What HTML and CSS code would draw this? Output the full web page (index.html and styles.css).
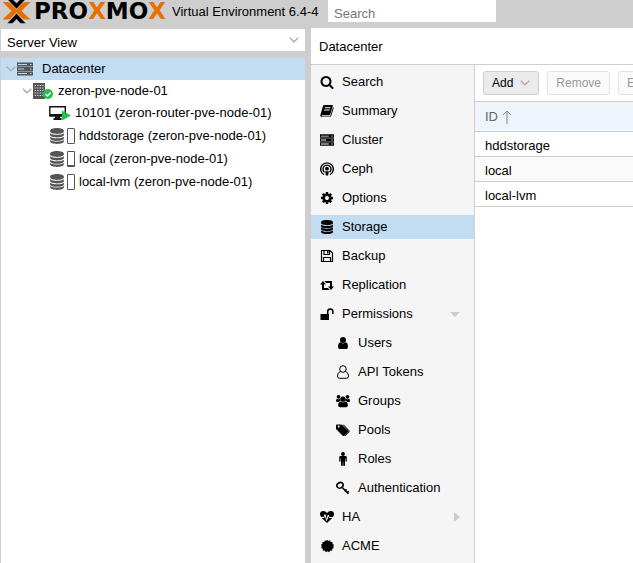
FILE: index.html
```html
<!DOCTYPE html>
<html lang="en">
<head>
<meta charset="utf-8">
<title>Proxmox Virtual Environment</title>
<link rel="stylesheet" href="styles.css">
</head>
<body>
<svg class="defs" aria-hidden="true">
  <symbol id="search" viewBox="0 0 1792 1792"><path d="M1216 832q0-185-131.5-316.5t-316.5-131.5-316.5 131.5-131.5 316.5 131.5 316.5 316.5 131.5 316.5-131.5 131.5-316.5zm512 832q0 52-38 90t-90 38q-54 0-90-38l-343-342q-179 124-399 124-143 0-273.5-55.5t-225-150-150-225-55.5-273.5 55.5-273.5 150-225 225-150 273.5-55.5 273.5 55.5 225 150 150 225 55.5 273.5q0 220-124 399l343 343q37 37 37 90z"/></symbol>
  <symbol id="book" viewBox="0 0 14 14"><path d="M4.6 1h7.6q.9 0 .6 1l-2.500 8.300q-.3.900-1.300.900H2.300q-.7 0-.7.500 0 .7 1 .7h6.800q.8 0 1.100-.9L13 3.200q.9.400.6 1.200l-2.400 7.700q-.4 1-1.400 1H2.200Q.3 13.100.3 11.200L2.900 2.300Q3.300 1 4.600 1zM5 3.300l-.3.900h5.600l.3-.9zM4.300 5.500l-.3.900h5.600l.3-.9z" fill-rule="evenodd"/></symbol>
  <symbol id="server" viewBox="0 0 16 14"><path fill-rule="evenodd" d="M0 .5h16v4H0zM1 2v1h9V2zM0 5h16v4H0zM1 6.500v1h6v-1zM0 9.500h16v4H0zM1 11v1h9v-1zM13 2v1h1.500V2zM13 6.500v1h1.500v-1zM13 11v1h1.500v-1z"/></symbol>
  <symbol id="ceph" viewBox="0 0 14 14"><g fill="none" stroke="currentColor" stroke-width="1.400"><path d="M4 12.700A6.300 6.300 0 1 1 10 12.700M4.500 10.200A4 4 0 1 1 9.500 10.200"/></g><circle cx="7" cy="6.700" r="1.900"/><path d="M5.200 9.200h3.600L8.200 13.500H5.800z"/></symbol>
  <symbol id="cog" viewBox="0 0 1792 1792"><path d="M1152 896q0-106-75-181t-181-75-181 75-75 181 75 181 181 75 181-75 75-181zm512-109v222q0 12-8 23t-20 13l-185 28q-19 54-39 91 35 50 107 138 10 12 10 25t-9 23q-27 37-99 108t-94 71q-12 0-26-9l-138-108q-44 23-91 38-16 136-29 186-7 28-36 28h-222q-14 0-24.500-8.500t-11.500-21.500l-28-184q-49-16-90-37l-141 107q-10 9-25 9-14 0-25-11-126-114-165-168-7-10-7-23 0-12 8-23 15-21 51-66.500t54-70.500q-27-50-41-99l-183-27q-13-2-21-12.500t-8-23.500v-222q0-12 8-23t19-13l186-28q14-46 39-92-40-57-107-138-10-12-10-24 0-10 9-23 26-36 98.500-107.500t94.500-71.500q13 0 26 10l138 107q44-23 91-38 16-136 29-186 7-28 36-28h222q14 0 24.500 8.500t11.500 21.500l28 184q49 16 90 37l142-107q9-9 24-9 13 0 25 10 129 119 165 170 7 8 7 22 0 12-8 23-15 21-51 66.500t-54 70.500q26 50 41 98l183 28q13 2 21 12.500t8 23.500z"/></symbol>
  <symbol id="database" viewBox="0 0 14 14"><path d="M1 2.200C1 .9 3.700 0 7 0s6 .9 6 2.200v.9c0 1.200-2.700 2.100-6 2.100S1 4.300 1 3.100zM1 4.700c1.300.9 3.600 1.300 6 1.300s4.700-.4 6-1.300v1.500c0 1.200-2.700 2.100-6 2.100s-6-.9-6-2.100zM1 7.600c1.300.9 3.600 1.300 6 1.300s4.700-.4 6-1.300v1.500c0 1.200-2.700 2.100-6 2.100s-6-.9-6-2.100zM1 10.500c1.300.9 3.600 1.300 6 1.300s4.700-.4 6-1.300v1.400C13 13.100 10.300 14 7 14s-6-.9-6-2.100z"/></symbol>
  <symbol id="floppy" viewBox="0 0 14 14"><path fill="none" stroke="currentColor" stroke-width="1.200" d="M1.500 1.500h8.500l2.500 2.500v8.500h-11zM4 1.500v4h5.500v-4M3.500 12.500v-4h7v4"/><path d="M7 2h1.500v2.500H7z"/></symbol>
  <symbol id="retweet" viewBox="0 0 14 14"><path d="M3 3 6 6.400H4V10h4l1.600 2H2V6.400H0zM4.500 3H12v5.600h2L11 12 8 8.600h2V5H6.200z"/></symbol>
  <symbol id="unlock" viewBox="0 0 14 14"><path d="M.5 7h8.500v6H.5z"/><path fill="none" stroke="currentColor" stroke-width="1.500" d="M7.700 7V4.500a2.600 2.600 0 0 1 5.200 0V7"/></symbol>
  <symbol id="user" viewBox="0 0 14 14"><circle cx="7" cy="4" r="3"/><path d="M4.300 6.300Q7 8.500 9.700 6.300 12 7 12 11q0 2-1.800 2H3.800Q2 13 2 11q0-4 2.300-4.700z"/></symbol>
  <symbol id="user-o" viewBox="0 0 14 14"><g fill="none" stroke="currentColor"><circle cx="7" cy="4" r="3.300"/><path d="M4.400 6.400Q1.500 7.500 1.500 11q0 2.300 2 2.300h7q2 0 2-2.300 0-3.500-2.900-4.600"/></g></symbol>
  <symbol id="group" viewBox="0 0 15 14"><circle cx="2.700" cy="2.500" r="2"/><circle cx="12.300" cy="2.500" r="2"/><path d="M1.200 4.500Q3 5.600 4.200 4.700q0 1.500.8 2.200-1.500.1-2.200 1.300H1.300Q0 8.200 0 6.700q0-2 1.200-2.200zM13.800 4.500Q12 5.600 10.800 4.700q0 1.500-.8 2.200 1.500.1 2.200 1.300h1.500q1.300 0 1.300-1.500 0-2-1.200-2.200z"/><circle cx="7.500" cy="5" r="2.900"/><path d="M4.800 7.500q2.700 1.900 5.400 0 2.500.5 2.500 4 0 2.200-1.900 2.200H4.200q-1.900 0-1.900-2.200 0-3.500 2.500-4z"/></symbol>
  <symbol id="tags" viewBox="0 0 15 14"><path fill-rule="evenodd" d="M0 2q0-1 1-1h4q1 0 1.700.6l6 6q.8.700 0 1.500l-4 4q-.7.700-1.500 0L.8 6.800Q0 6 0 5zm1.800 1.200a1.100 1.100 0 1 0 2.200 0 1.100 1.100 0 0 0-2.200 0z"/><path d="M7 1q1.200 0 2 .8l5.300 5.700q.8.800 0 1.600l-4 4q-.8.700-1.500 0l4.500-4.600q.3-.3 0-.8z"/></symbol>
  <symbol id="male" viewBox="0 0 14 14"><circle cx="7" cy="2" r="1.900"/><path d="M4.500 4h5q1.300 0 1.300 1.300V9q0 .7-.6.700T9.500 9V6.500H9v6.700q0 .8-.9.800t-.9-.8V9.500h-.4v3.700q0 .8-.9.800t-.9-.8V6.500h-.5V9q0 .7-.7.700T3.200 9V5.300Q3.200 4 4.500 4z"/></symbol>
  <symbol id="key" viewBox="0 0 14 14"><g fill="none" stroke="currentColor" stroke-width="1.600"><ellipse cx="4" cy="4.300" rx="3.200" ry="2.700" transform="rotate(-30 4 4.300)"/><path d="m6.200 6.500 6.300 6.200M8.600 10.400l1.900-2M10.700 12.300l1.900-2"/></g></symbol>
  <symbol id="heart" viewBox="0 0 14 14"><path d="M7 13 2 8.200Q0 6.300 0 4.200 0 1 3.500 1 5.500 1 7 2.900 8.500 1 10.500 1 14 1 14 4.200q0 2.100-2 4z"/><path fill="none" stroke="#f5f5f5" d="M.5 7.500H4l1-3 1.600 6L8.200 5l1 2.500h4.300"/></symbol>
  <symbol id="certificate" viewBox="0 0 14 14"><path d="m7 .8 1.300 1.100 1.700-.7.700 1.700 1.900.1-.1 1.900 1.600.9-.9 1.600.7 1.700-1.700.7-.1 1.900-1.900-.1-1 1.600L7.500 12.300l-1.700.9-1-1.600-1.900.1-.1-1.900-1.700-.7.700-1.700-.9-1.600 1.600-.9-.1-1.900 1.900-.1.700-1.700 1.300.7z"/></symbol>
  <symbol id="building" viewBox="0 0 14 16"><path fill="#555" d="M0 0h12v16H0z"/><path fill="none" stroke="#ddd" stroke-width="1.200" stroke-dasharray="1.300 1.200" d="M1.700 2.500H11M1.700 5H11M1.700 7.500H11M1.700 10H11M1.700 12.500H11"/></symbol>
  <symbol id="chevron" viewBox="0 0 10 6"><path fill="none" stroke="currentColor" stroke-width="1.200" d="m.8.800 4.200 4 4.200-4"/></symbol>
</svg>

<header class="top">
  <a class="brand" href="#" aria-label="Proxmox">
    <svg class="mark" viewBox="0 0 28 24" aria-hidden="true">
      <path fill="#e57000" d="M0 2h5q2 0 3.500 1.600L14 9.500l5.500-5.900Q21 2 23 2h5l-9 9 9 8.500h-5q-2 0-3.500-1.600L14 12.500l-5.500 5.400Q7 19.500 5 19.500H0L9 11z"/>
      <path fill="#000" stroke="#cecece" stroke-width=".5" d="m4.500-1 9.500 10L23.500-1H18l-4 4-4-4zM4.500 23.500 14 13.300l9.500 10.200h-4q-1.500 0-2.500-1l-3-3.300-3 3.300q-1 1-2.500 1z"/>
    </svg>
    <span class="wordmark">PRO<b>X</b>MO<b>X</b></span>
  </a>
  <span class="version">Virtual Environment 6.4-4</span>
  <input class="find" type="search" placeholder="Search" aria-label="Search">
</header>

<div class="workspace">
  <aside class="side">
    <button class="view" type="button">Server View<svg class="chev"><use href="#chevron"/></svg></button>
    <ul class="tree">
      <li class="selected"><svg class="chev"><use href="#chevron"/></svg><svg class="wide"><use href="#server"/></svg><span class="root-name">Datacenter</span></li>
      <li class="node"><svg class="chev"><use href="#chevron"/></svg>
        <svg class="node-icon" viewBox="0 0 20 16"><use href="#building" width="14" height="16"/><circle cx="15" cy="11" r="5" fill="#21bf4b"/><path d="m12.500 11 2 2 3.300-3.600" fill="none" stroke="#fff" stroke-width="1.500"/></svg><span>zeron-pve-node-01</span></li>
      <li class="leaf"><svg class="vm-icon" viewBox="0 0 22 16"><path fill="none" stroke="#111" stroke-width="1.400" d="M.8 1.700h15.500v9H.8z"/><path fill="#111" d="M1 9h15v2.500H1zM6 11h5v2.500H6zM4.500 13h8v2h-8z"/><path fill="#21bf4b" d="m13 5.500 9 5-9 5z"/></svg><span>10101 (zeron-router-pve-node-01)</span></li>
      <li class="leaf storage"><svg class="db"><use href="#database"/></svg><i class="gauge"></i><span>hddstorage (zeron-pve-node-01)</span></li>
      <li class="leaf storage"><svg class="db"><use href="#database"/></svg><i class="gauge low"></i><span>local (zeron-pve-node-01)</span></li>
      <li class="leaf storage"><svg class="db"><use href="#database"/></svg><i class="gauge"></i><span>local-lvm (zeron-pve-node-01)</span></li>
    </ul>
  </aside>

  <main class="main">
    <h1 class="title">Datacenter</h1>
    <div class="body">
      <nav class="nav">
        <a href="#"><svg><use href="#search"/></svg>Search</a>
        <a href="#"><svg><use href="#book"/></svg>Summary</a>
        <a href="#"><svg><use href="#server"/></svg>Cluster</a>
        <a href="#"><svg><use href="#ceph"/></svg>Ceph</a>
        <a href="#"><svg><use href="#cog"/></svg>Options</a>
        <a href="#" class="selected"><svg><use href="#database"/></svg>Storage</a>
        <a href="#"><svg><use href="#floppy"/></svg>Backup</a>
        <a href="#"><svg><use href="#retweet"/></svg>Replication</a>
        <a href="#"><svg><use href="#unlock"/></svg>Permissions<i class="caret down"></i></a>
        <a href="#" class="sub"><svg><use href="#user"/></svg>Users</a>
        <a href="#" class="sub"><svg><use href="#user-o"/></svg>API Tokens</a>
        <a href="#" class="sub"><svg><use href="#group"/></svg>Groups</a>
        <a href="#" class="sub"><svg><use href="#tags"/></svg>Pools</a>
        <a href="#" class="sub"><svg><use href="#male"/></svg>Roles</a>
        <a href="#" class="sub"><svg><use href="#key"/></svg>Authentication</a>
        <a href="#"><svg><use href="#heart"/></svg>HA<i class="caret right"></i></a>
        <a href="#"><svg><use href="#certificate"/></svg>ACME</a>
      </nav>
      <section class="content">
        <div class="toolbar">
          <button class="add" type="button">Add<svg class="chev"><use href="#chevron"/></svg></button>
          <button type="button" disabled>Remove</button>
          <button type="button" disabled>Edit</button>
        </div>
        <table>
          <thead><tr><th>ID<svg class="sort" viewBox="0 0 10 14"><path fill="none" stroke="currentColor" d="M5 14V1M1 5l4-4 4 4"/></svg></th></tr></thead>
          <tbody>
            <tr><td>hddstorage</td></tr>
            <tr><td>local</td></tr>
            <tr><td>local-lvm</td></tr>
          </tbody>
        </table>
      </section>
    </div>
  </main>
</div>
</body>
</html>
```
FILE: styles.css
```css
* { box-sizing: border-box; }
body {
  margin: 0;
  height: 100vh;
  display: flex;
  flex-direction: column;
  overflow: hidden;
  background: #cecece;
  color: #000;
  font: 13px/16px "Liberation Sans", Arial, sans-serif;
}
button, input { font: inherit; color: inherit; }
a { color: inherit; text-decoration: none; }
svg { flex: none; fill: currentColor; }
.defs { position: absolute; width: 0; height: 0; }
.chev { width: 10px; height: 6px; color: #aaa; }

.top { display: flex; flex: none; height: 28px; align-items: flex-start; }
.brand { display: flex; flex: none; width: 172px; padding-left: 2px; gap: 3px; }
.mark { width: 29px; height: 24px; }
.wordmark { font: bold 23px/22px "DejaVu Sans", sans-serif; }
.wordmark b { color: #e57000; }
.version { flex: none; width: 156px; padding-top: 4px; white-space: nowrap; }
.find {
  width: 168px;
  height: 22px;
  padding: 4px 6px 0;
  border: 0;
  border-radius: 0;
  background: #fff;
  appearance: none;
}
.find::placeholder { color: #757575; opacity: 1; }

.workspace { display: flex; flex: 1; min-height: 0; }
.side {
  display: flex;
  flex: none;
  flex-direction: column;
  gap: 7px;
  width: 310px;
  padding: 1px 5px 0 1px;
}
.view {
  display: flex;
  justify-content: space-between;
  height: 22px;
  padding: 6px 6px 0;
  border: 0;
  background: #fff;
}
.view .chev { margin-top: 2px; }
.tree { flex: 1; margin: 0; padding: 0; background: #fff; list-style: none; white-space: nowrap; }
.tree li { display: flex; align-items: center; height: 22px; padding-left: 5px; color: #000; }
.tree .wide { width: 16px; height: 14px; margin-left: 1px; color: #555; }
.root-name { margin-left: 9px; }
.selected { background: #c2ddf2; }
.tree .node { padding-left: 21px; }
.node-icon { width: 20px; height: 16px; margin: 0 5px 0 1px; }
.tree .leaf { padding-left: 48px; }
.vm-icon { width: 22px; height: 16px; margin-right: 4px; }
.tree .storage { height: 23px; }
.db { width: 16px; height: 16px; color: #555; }
.gauge { width: 8px; height: 16px; margin: 0 4px 0 2px; border: 1px solid #555; border-radius: 1px; }
.gauge.low { border-bottom-width: 2px; }

.main { display: flex; flex: 1; flex-direction: column; min-width: 0; border-left: 1px solid #cecece; background: #fff; }
.title { flex: none; height: 37px; margin: 0; padding: 11px 8px 0; border-bottom: 1px solid #cecece; font: inherit; }
.body { display: flex; flex: 1; min-height: 0; }
.nav {
  display: flex;
  flex: none;
  flex-direction: column;
  gap: 5px;
  width: 164px;
  padding-top: 5px;
  border-right: 1px solid #cecece;
  background: #f5f5f5;
}
.nav a { display: flex; flex: none; align-items: center; height: 24px; padding: 0 14px 0 9px; }
.nav svg { width: 14px; height: 14px; margin-right: 8px; }
.nav .sub { padding-left: 25px; }
.caret { width: 0; height: 0; margin-left: auto; border: 5px solid transparent; }
.caret.down { border-top-color: #ccc; border-bottom-width: 0; }
.caret.right { border-left: 6px solid #ccc; border-right-width: 0; }

.content { flex: 1; min-width: 0; overflow: hidden; }
.toolbar { display: flex; gap: 8px; height: 36px; padding: 6px 8px; }
.toolbar button {
  flex: none;
  height: 24px;
  padding: 0 8px;
  border: 1px solid #e4e4e4;
  border-radius: 3px;
  background: #fafafa;
  color: #999;
  font-size: 12px;
}
.toolbar .add { display: flex; align-items: center; gap: 7px; border-color: #cecece; background: #ebebeb; color: #000; }
table { width: 100%; border-collapse: separate; border-spacing: 0; }
th {
  height: 31px;
  padding: 0 10px;
  border: solid #cecece;
  border-width: 1px 0;
  background: #eef5fc;
  color: #666;
  font-weight: normal;
  text-align: left;
}
.sort { width: 10px; height: 14px; margin-left: 4px; vertical-align: middle; color: #888; }
td { height: 25px; padding: 3px 10px 0; border-bottom: 1px solid #cecece; }
tbody tr:nth-child(even) { background: #fafafa; }
```
